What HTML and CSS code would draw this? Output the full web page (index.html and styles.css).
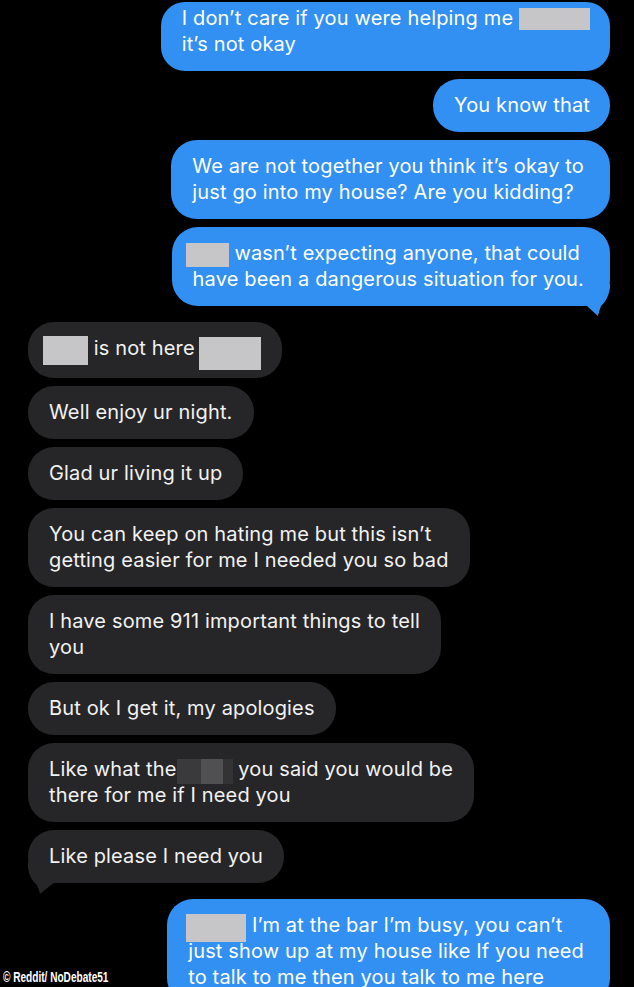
FILE: index.html
```html
<!DOCTYPE html>
<html lang="en">
<head>
  <meta charset="UTF-8">
  <meta name="viewport" content="width=device-width, initial-scale=1.0">
  <title>Messages</title>
  <link rel="stylesheet" href="styles.css">
</head>
<body>

<!-- ROZMOWA -->
<main class="chat">
  <div class="group sent">
    <div class="bubble first tight">I don’t care if you were helping me <span class="redact r-top"></span><br>it’s not okay</div>
    <div class="bubble tight">You know that</div>
    <div class="bubble">We are not together you think it’s okay to<br>just go into my house? Are you kidding?</div>
    <div class="bubble tail-right"><span class="redact r-name"></span> wasn’t expecting anyone, that could<br>have been a dangerous situation for you.
      <svg class="tail" width="32" height="32" viewBox="0 0 32 32"><path d="M2 0 H30 V4 Q28 16 21 22 Q19 27 18 32 Q11 26 5 20 L2 16 Z" fill="#3190f1"/></svg>
    </div>
  </div>

  <div class="group received">
    <div class="bubble"><span class="redact r-a"></span> is not here <span class="redact r-b"></span></div>
    <div class="bubble">Well enjoy ur night.</div>
    <div class="bubble">Glad ur living it up</div>
    <div class="bubble">You can keep on hating me but this isn’t<br>getting easier for me I needed you so bad</div>
    <div class="bubble">I have some 911 important things to tell<br>you</div>
    <div class="bubble">But ok I get it, my apologies</div>
    <div class="bubble">Like what the<span class="mosaic"></span> you said you would be<br>there for me if I need you</div>
    <div class="bubble tail-left">Like please I need you
      <svg class="tail" width="32" height="32" viewBox="0 0 32 32"><path d="M0 0 V6 Q2 18 9 23 Q11 28 12 32 Q19 26 27 20 L30 16 V0 Z" fill="#262628"/></svg>
    </div>
  </div>

  <div class="group sent">
    <div class="bubble"><span class="redact r-bar"></span> I’m at the bar I’m busy, you can’t<br>just show up at my house like If you need<br>to talk to me then you talk to me here</div>
  </div>
</main>

<!-- PODPIS ZRODLA -->
<div class="credit">© Reddit/ NoDebate51</div>

</body>
</html>
```

FILE: styles.css
```css
* {
  margin: 0;
  padding: 0;
  box-sizing: border-box;
}
body {
  height: 987px;
  background-color: #000;
  color: #fff;
  font-family: Inter, "Noto Sans", sans-serif;
  overflow: hidden;
  position: relative;
}
.chat {
  display: flex;
  flex-direction: column;
  gap: 16px;
  padding: 2px 24px 0 28px;
}
.group {
  display: flex;
  flex-direction: column;
  gap: 8px;
}
.sent {
  align-items: flex-end;
}
.received {
  align-items: flex-start;
}
.bubble {
  position: relative;
  padding: 13px 21px 14px;
  border-radius: 26px;
  font-size: 20px;
  line-height: 26px;
  letter-spacing: 0.15px;
  white-space: nowrap;
}
.sent .bubble {
  padding-right: 26px;
  background: #3190f1;
  color: #fff;
}
.sent .bubble.tight {
  padding-right: 20px;
}
.received .bubble {
  background: #262628;
  color: #f2f2f2;
}
.bubble.first {
  padding-top: 3px;
  border-radius: 24px;
}
/* Ogonki dymkow - pod tlem dymka, zeby nie zaslanialy tekstu */
.tail {
  position: absolute;
  z-index: -1;
}
.tail-right .tail {
  right: -2px;
  bottom: -10px;
}
.tail-left .tail {
  left: 0;
  bottom: -11px;
}
/* Zamazane fragmenty - ujemne marginesy, zeby nie rozpychaly linii */
.redact {
  display: inline-block;
  background: #c6c6c8;
}
.r-top {
  width: 71px;
  height: 22px;
  margin: -2px 0;
  vertical-align: -3px;
}
.r-name {
  width: 43px;
  height: 24px;
  margin: -2px 0 -2px -7px;
  vertical-align: -5px;
}
.r-a {
  width: 45px;
  height: 29px;
  margin: -4px 0 -4px -6px;
  vertical-align: -6px;
}
.r-b {
  width: 62px;
  height: 33px;
  margin: -6px 0 -6px -2px;
  vertical-align: -9px;
}
.r-bar {
  width: 60px;
  height: 28px;
  margin: -4px 0 -4px -2px;
  vertical-align: -6px;
}
.mosaic {
  display: inline-block;
  width: 56px;
  height: 25px;
  margin: -2px 0;
  vertical-align: -6px;
  background: linear-gradient(to right, #3a3a3c 0 42%, #505052 42% 82%, #333335 82%);
}
.credit {
  position: absolute;
  left: 3px;
  bottom: 2px;
  font-family: "Liberation Sans", Arial, sans-serif;
  font-weight: bold;
  font-size: 14px;
  color: #fff;
  transform: scaleX(0.72);
  transform-origin: left bottom;
}
```
